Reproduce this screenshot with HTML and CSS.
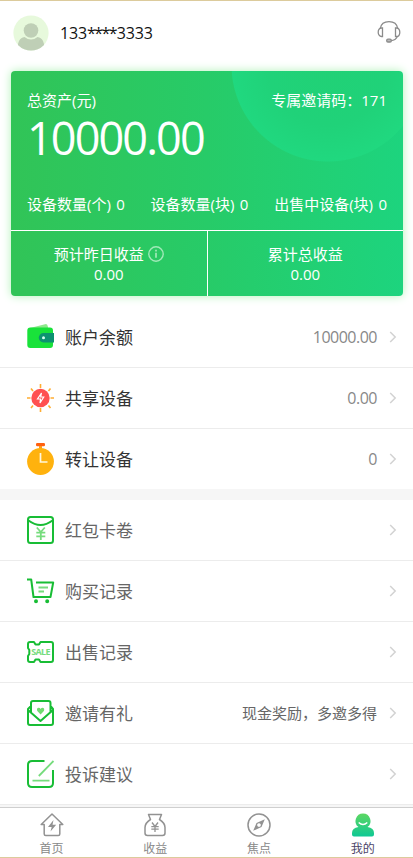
FILE: index.html
```html
<!DOCTYPE html>
<html lang="zh-CN">
<head>
<meta charset="utf-8">
<title>我的</title>
<link rel="stylesheet" href="styles.css">
</head>
<body>
<div class="page">
  <header class="header">
    <svg class="avatar" viewBox="0 0 36 36"><defs><clipPath id="round"><circle cx="18" cy="18" r="17.6"/></clipPath></defs><circle cx="18" cy="18" r="17.6" fill="#e7f9dc"/><g clip-path="url(#round)" fill="#bfcfb6"><circle cx="18" cy="15.500" r="7.300"/><path d="M5 29Q6 23 11.500 22Q18 27 24.500 22Q30 23 31 29V36H5Z"/></g></svg>
    <span class="phone">133<span class="mask">****</span>3333</span>
    <svg class="service" viewBox="0 0 24 24" fill="none" stroke="#8b8b8b" stroke-width="1.300"><path d="M3.300 8.500C4 4 7.500 1.700 12 1.700S20 4 20.700 8.500"/><path d="M5.500 8v8.500H4.500C2.500 16.500 1.200 14.500 1.200 12.200S2.500 8 4.500 8ZM18.500 8v8.500h1c2 0 3.300-2 3.300-4.300S21.500 8 19.500 8Z"/><path d="M20.500 16.300C19 19.500 17 20.500 14 20.700"/><rect x="9.700" y="19.200" width="4.600" height="2.800" rx="1.300" fill="#bbb"/></svg>
  </header>

  <section class="card">
    <div class="assets">
      <div class="line"><span>总资产(元)</span><span>专属邀请码：171</span></div>
      <div class="total">10000.00</div>
      <div class="line counts"><span>设备数量(个) 0</span><span>设备数量(块) 0</span><span>出售中设备(块) 0</span></div>
    </div>
    <div class="earnings">
      <div class="earning"><div class="caption">预计昨日收益<svg class="info" viewBox="0 0 16 16" fill="none" stroke="#a0e9b8" stroke-width="1.400"><circle cx="8" cy="8" r="7.200"/><path d="M8 6.800v5M8 3.800v1.700" stroke-width="1.700"/></svg></div><div>0.00</div></div>
      <div class="earning"><div class="caption">累计总收益</div><div>0.00</div></div>
    </div>
  </section>

  <ul class="list main">
    <li><svg class="icon" viewBox="0 0 28 32"><path d="M3 7 19 3q1.500 0 2 3v3H3Z" fill="#8ee98c"/><rect x=".3" y="6.500" width="25.700" height="20.500" rx="3" fill="#19e23a"/><path d="M16.500 12H27v9.500H16.500a4.700 4.700 0 0 1 0-9.500Z" fill="#0c9270"/><circle cx="16.500" cy="16.800" r="1.500" fill="#d6fff0"/></svg><span class="name">账户余额</span><span class="value num">10000.00</span><svg class="arrow" viewBox="0 0 8 12"><path d="m1.200 1 5 5-5 5"/></svg></li>
    <li><svg class="icon" viewBox="0 0 28 32"><path d="M13.500 2v4M13.500 26v4M0 16h3.500M23.500 16H27M4 6.500l2 2.500M23.500 6.500l-2 2.500M4 26l2-2.500M23.500 26l-2-2.500" stroke="#ffad32" stroke-width="1.600"/><circle cx="13.500" cy="16" r="9.200" fill="#ff5050"/><path d="m14.500 11-4 6h3l-.5 4 3.700-6h-3Z" fill="none" stroke="#fff" stroke-width="1.200"/></svg><span class="name">共享设备</span><span class="value num">0.00</span><svg class="arrow" viewBox="0 0 8 12"><path d="m1.200 1 5 5-5 5"/></svg></li>
    <li><svg class="icon" viewBox="0 0 28 32"><rect x="9" y="0" width="9" height="3.200" rx="1.200" fill="#ff6110"/><path d="M12 3h3v3h-3Z" fill="#ff9c19"/><circle cx="13.500" cy="18.500" r="13.400" fill="#ffb20e"/><path d="M13.500 10v9h7" fill="none" stroke="#fff7dc" stroke-width="1.700"/></svg><span class="name">转让设备</span><span class="value num">0</span><svg class="arrow" viewBox="0 0 8 12"><path d="m1.200 1 5 5-5 5"/></svg></li>
  </ul>

  <ul class="list more">
    <li><svg class="icon green" viewBox="0 0 28 32"><rect x="1" y="3" width="25" height="26" rx="2.500"/><path d="M1.500 6.500q12 9 24 0"/><path class="soft" d="m9.800 13.500 4 4.500 4-4.500M13.800 18v8M9.300 18.700h9M9.300 22.300h9"/></svg><span class="name">红包卡卷</span><span class="value"></span><svg class="arrow" viewBox="0 0 8 12"><path d="m1.200 1 5 5-5 5"/></svg></li>
    <li><svg class="icon green" viewBox="0 0 28 32"><path d="M0 4.500h4.200L6.500 22h17l2.700-14.500H9"/><path class="soft" d="M11.500 12.500H21M11.500 16.500h5.500"/><circle cx="9" cy="26.200" r="1" class="solid"/><circle cx="20.200" cy="26.200" r="1" class="solid"/></svg><span class="name">购买记录</span><span class="value"></span><svg class="arrow" viewBox="0 0 8 12"><path d="m1.200 1 5 5-5 5"/></svg></li>
    <li><svg class="icon green" viewBox="0 0 28 32"><path d="M3 6h4l1.500 2.500h3.500L13.500 6H24q2 0 2 2v16q0 2-2 2H13.500L12 23.500H8.500L7 26H3q-2 0-2-2v-4l1.300-2v-4L1 12V8q0-2 2-2Z"/><text x="13.900" y="19.300" class="sale" textLength="19.500">SALE</text></svg><span class="name">出售记录</span><span class="value"></span><svg class="arrow" viewBox="0 0 8 12"><path d="m1.200 1 5 5-5 5"/></svg></li>
    <li><svg class="icon green" viewBox="0 0 28 32"><path d="M4 15.500V6q0-2 2-2h15.500q2 0 2 2v9.500M4 9 1 12v14q0 2 2 2h21q2 0 2-2V12l-2.500-3M1 13l12.500 11L26 13"/><path class="heart" d="M13.600 17.500 10.300 14q-1-3 1.300-3.200 1.500 0 2 1.300.7-1.300 2-1.300 2.300.2 1.300 3.200Z"/></svg><span class="name">邀请有礼</span><span class="value">现金奖励，多邀多得</span><svg class="arrow" viewBox="0 0 8 12"><path d="m1.200 1 5 5-5 5"/></svg></li>
    <li><svg class="icon green" viewBox="0 0 28 32"><path d="M17.500 3H5Q1 3 1 7v18q0 4 4 4h17q4 0 4-4V12"/><path class="soft" d="M26.500 3 11.800 18M5.500 22.700h17"/></svg><span class="name">投诉建议</span><span class="value"></span><svg class="arrow" viewBox="0 0 8 12"><path d="m1.200 1 5 5-5 5"/></svg></li>
  </ul>

  <nav class="tabs">
    <a class="tab"><svg viewBox="0 0 24 24"><path d="M12 1 1.200 11.500h3V21q0 1.500 1.500 1.500h12.600q1.500 0 1.500-1.500v-9.500h3Z"/><path class="filled" d="m13.500 7-5.500 7h3.700l-1.200 4.500 5.700-6.700h-3.700Z"/></svg><span>首页</span></a>
    <a class="tab"><svg viewBox="0 0 24 24"><path d="M7.500 6.500 5.500 1.500h13l-2 5Q22 10 22 14.500V20q0 2.500-2.500 2.500h-15Q2 22.500 2 20v-5.500Q2 10 7.500 6.500Z"/><path class="thin" d="m9 9.500 3 4 3-4M12 13.500V19M8.300 13.700h7.400M8.300 16.200h7.400"/></svg><span>收益</span></a>
    <a class="tab"><svg viewBox="0 0 24 24"><circle cx="12" cy="12" r="11"/><path class="filled" fill-rule="evenodd" d="M17.800 6.200 14.500 14 6.200 17.800 9.500 10ZM12 10.200a1.800 1.800 0 1 0 .01 0Z"/></svg><span>焦点</span></a>
    <a class="tab active"><svg viewBox="0 0 24 24"><defs><linearGradient id="person" x2="0" y2="1"><stop stop-color="#5dd762"/><stop offset="1" stop-color="#0fc894"/></linearGradient></defs><path class="person" d="M12 .5a7.500 7.500 0 0 1 4.500 13.500Q23 15 23 20v1.500q0 2-2 2H3q-2 0-2-2V20q0-5 6.500-6A7.500 7.500 0 0 1 12 .5Z"/><path class="smile" d="M7.700 9.500q4.300 4 8.600 0"/></svg><span>我的</span></a>
  </nav>
</div>
</body>
</html>
```
FILE: styles.css
```css
* { box-sizing: border-box; }
body { margin: 0; background: #fff; font-family: "Open Sans", "Noto Sans CJK SC", sans-serif; }
.page {
  display: flex;
  flex-direction: column;
  width: 413px;
  height: 858px;
  overflow: hidden;
  border-top: 1px solid #dccb9c;
  border-bottom: 1px solid #dccb9c;
}

.header { display: flex; align-items: center; flex: none; height: 63px; padding: 0 12px 0 13px; }
.avatar { width: 36px; height: 36px; }
.phone { flex: 1; margin-left: 11px; font-size: 16px; line-height: 24px; letter-spacing: -0.15px; color: #111; padding-top: 1px; }
.mask { letter-spacing: -1.6px; margin-right: 1px; }
.service { width: 24px; height: 24px; margin-top: -2px; }

.card {
  flex: none;
  height: 225px;
  margin: 7px 10px 11px 11px;
  border-radius: 4px;
  color: #fff;
  font-size: 15px;
  line-height: 20px;
  white-space: nowrap;
  background:
    radial-gradient(circle at 317px -6px, #21d176 0, #20d279 60px, #20d87f 96px, transparent 97px),
    linear-gradient(90deg, #31c457, #27cb68 50%, #1dd47e);
  box-shadow: 0 0 10px #b1f2b8;
}
.assets { height: 160px; padding: 19px 16px 0; border-bottom: 1px solid #fff; }
.line { display: flex; justify-content: space-between; }
.total { height: 46px; margin-top: 5px; line-height: 46px; font-size: 45px; letter-spacing: -1.9px; }
.counts { margin-top: 33px; word-spacing: 1.5px; }
.earnings { display: flex; height: 65px; text-align: center; }
.earning { flex: 1; padding-top: 13px; }
.earning + .earning { border-left: 1px solid #fff; }
.caption { display: flex; align-items: center; justify-content: center; }
.info { width: 16px; height: 16px; margin-left: 4px; }

.list { flex: none; margin: 0; padding: 0; list-style: none; }
.list li { display: flex; align-items: center; height: 61px; padding: 0 16px 0 27px; border-bottom: 1px solid #ececec; }
.main li:last-child { height: 60px; border: 0; }
.more { border-top: 11px solid #f6f6f6; }
.icon { width: 28px; height: 32px; }
.name { flex: 1; margin-left: 10px; font-size: 17px; line-height: 24px; color: #333; padding-top: 2px; }
.more .name { color: #666; }
.value { font-size: 15px; line-height: 22px; color: #666; white-space: nowrap; }
.num { font-size: 16px; letter-spacing: -0.5px; color: #888; }
.arrow { width: 8px; height: 12px; margin-left: 12px; fill: none; stroke: #d2d2d2; stroke-width: 1.5; }
.green { fill: none; stroke: #18bd35; stroke-width: 2; stroke-linejoin: round; }
.green .soft { stroke: #76dc7d; stroke-width: 1.8; }
.green .solid { fill: #18bd35; }
.green .heart { fill: #70dc70; stroke: none; }
.sale { font: 700 9px "Open Sans", sans-serif; fill: #76dc7d; stroke: none; text-anchor: middle; }

.tabs { display: flex; gap: 0.5px; flex: none; height: 53px; background: linear-gradient(#f6f6f6 2px, #cfcfcf 2px 3px, #fff 3px); }
.tab { display: flex; flex: 0 0 103.25px; flex-direction: column; align-items: center; padding-top: 8px; font-size: 12px; line-height: 18px; color: #888; }
.tab svg { width: 24px; height: 24px; margin-bottom: 3px; fill: none; stroke: #929292; stroke-width: 1.5; stroke-linejoin: round; }
.tab .thin { stroke-width: 1.3; }
.tab .filled { fill: #929292; stroke: none; }
.tab .person { fill: url(#person); stroke: none; }
.tab .smile { stroke: #fff; }
.active { color: #4b4468; }
```
